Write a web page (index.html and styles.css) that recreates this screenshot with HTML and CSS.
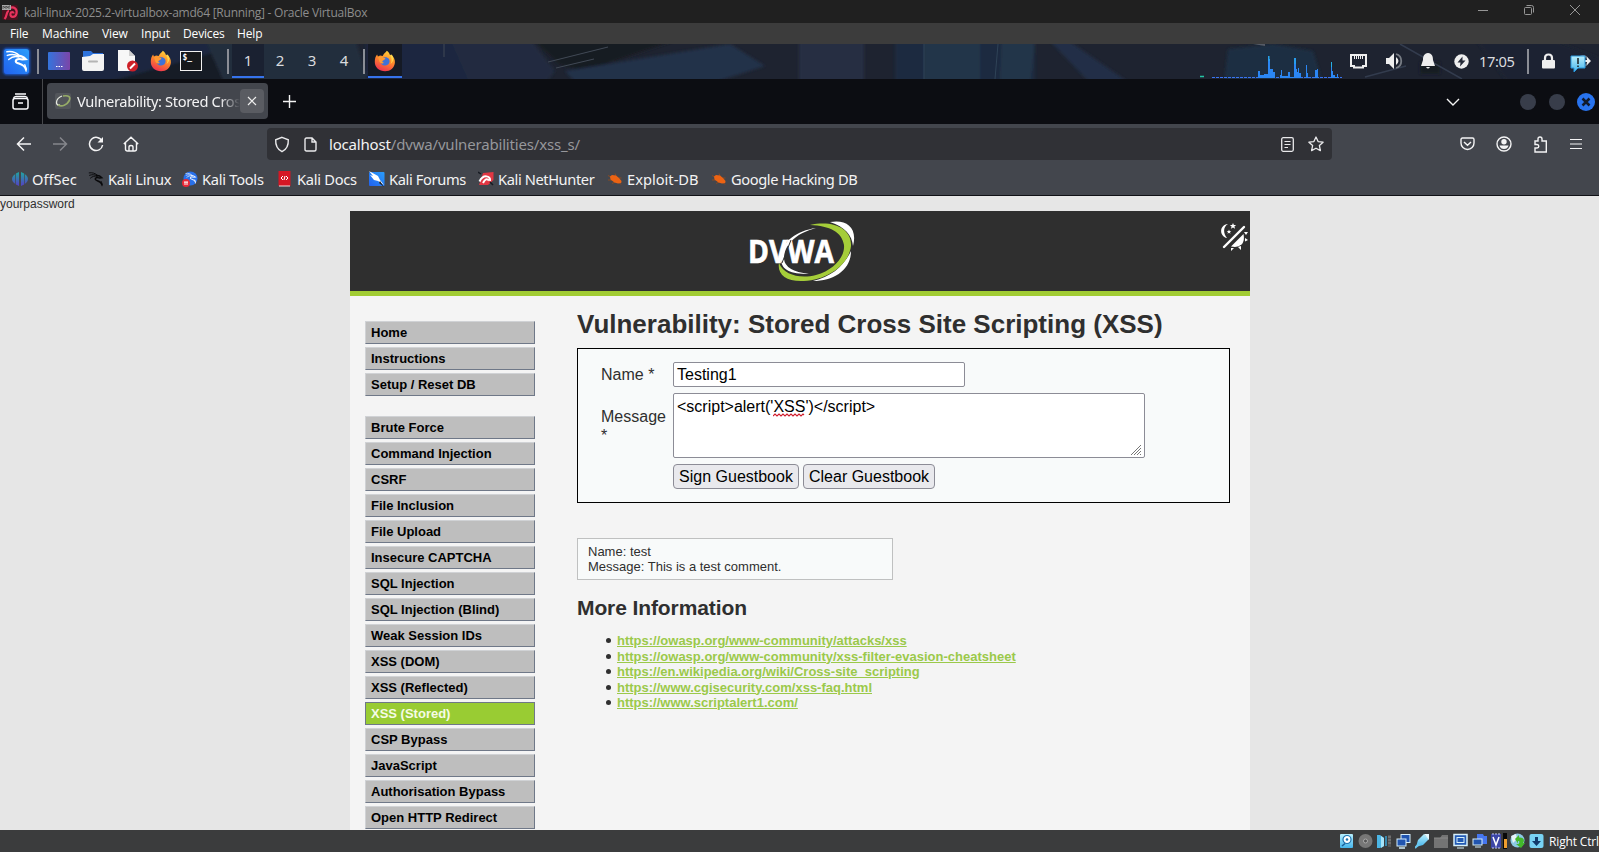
FILE: index.html
```html
<!DOCTYPE html>
<html lang="en">
<head>
<meta charset="utf-8">
<title>kali-linux-2025.2-virtualbox-amd64 [Running] - Oracle VirtualBox</title>
<link rel="stylesheet" href="styles.css">
</head>
<body>
<svg class="defs" width="0" height="0">
  <defs>
    <linearGradient id="fx" x1="0.7" y1="0" x2="0.3" y2="1"><stop offset="0" stop-color="#ffd43c"/><stop offset=".45" stop-color="#ff8a2a"/><stop offset="1" stop-color="#ee2f52"/></linearGradient>
    <linearGradient id="desk" x1="0" y1="0" x2="1" y2="0"><stop offset="0" stop-color="#3474dd"/><stop offset="1" stop-color="#7c45a8"/></linearGradient>
    <linearGradient id="kali" x1="0" y1="1" x2="1" y2="0"><stop offset="0" stop-color="#2161ee"/><stop offset="1" stop-color="#2a9dfb"/></linearGradient>
    <linearGradient id="off" x1="0" y1="0" x2="0" y2="1"><stop offset="0" stop-color="#1fa6a0"/><stop offset="1" stop-color="#553fc4"/></linearGradient>
    <linearGradient id="sky" x1="0" y1="0" x2="0" y2="1"><stop offset="0" stop-color="#b8eefc"/><stop offset="1" stop-color="#45b5ec"/></linearGradient>
    <filter id="soft"><feGaussianBlur stdDeviation="1.500"/></filter>
    <filter id="glow"><feGaussianBlur stdDeviation="1.200"/></filter>
    <symbol id="firefox" viewBox="0 0 22 22">
      <path d="M12.8.8c2 1.400 2.900 3 3.300 4.800l1-1.200c2.600 2.300 4.100 5 3.800 8.400-.5 5-4.600 8.500-9.800 8.500C5.300 21.300.8 17.300.8 12c0-3.500.8-5.800 2.300-7.500l.8 2 2.200-1 2.600.4C9.800 3.200 11.800 2.700 12.800.8z" fill="url(#fx)"/>
      <path d="M8 8.500c1.500-1.500 5.500-1.800 7 .6 1.600 3-.2 6.300-3.700 6.500-3 .1-5-2-4.600-4.500l3-.7z" fill="#3f72d8"/>
      <path d="M4 7.200c2.500-.8 4.600-.4 5.500.3 1.300.2 2 .8 1.900 1.600L8.700 10.600c-1 1.200.2 2.400 1.600 2.200-2 1.600-5 .3-5.200-2.300z" fill="#ff9a32"/>
      <path d="M16.200 5.500c1.800 2.500 2 6 .3 8.400 2.500-1.500 3.500-5 2-8.200l-1.400-1.300z" fill="#ffd84d"/>
    </symbol>
    <symbol id="dragon" viewBox="0 0 26 26">
      <g fill="none" stroke="currentColor" stroke-linecap="round">
        <path d="M2 3c5-.8 10 .5 14 4.500M2.500 7c4-1.500 8-1.500 12.500.8M4 11.500c3-2.800 7-4 11-2.800" stroke-width="1.500"/>
        <path d="M14 7.500c3-.4 5.500.4 8.500 3.500l-3.500.3c-4-1-7.500-.5-7.300 2.200.2 3 8.800 1.500 11 8.500" stroke-width="2.300"/>
        <path d="M21.500 17c1 2 1.500 4 1.300 7" stroke-width="1.500"/>
      </g>
    </symbol>
    <symbol id="bug" viewBox="0 0 16 16"><path d="M1 4.500l3 1.500M1 9h5M5 12.500l3-1.500M8 2.500l1 2.500M14.500 7h-3M14 13.500l-2-2" stroke="#8a4a22" stroke-width="1"/><path d="M3 5.500l2-1.500 4 .5 3 2.500 2.500 3-.3 2-3.200.5-3.500-1-4-3z" fill="#ec6313"/></symbol>
  </defs>
</svg>

<header class="titlebar">
  <svg class="vmicon" width="18" height="18" viewBox="0 0 18 18"><rect x="1" y="2" width="16" height="15" rx="2" fill="#47131f"/><path d="M8.500 5c4.500-2 8 1 7 5.500-1 4.500-7 4.500-6 0 .4-2 3-2 3 0M8 8c-3 0-1.500 5-4.500 8" fill="none" stroke="#e8335d" stroke-width="2.200"/><path d="M1 2h9v5H1z" fill="#a9a9a9"/><path d="M2 6V3l2 2V3m1 3V3l2 2V3m1 3V3h1" fill="none" stroke="#444" stroke-width=".8"/></svg>
  <span class="wtitle">kali-linux-2025.2-virtualbox-amd64 [Running] - Oracle VirtualBox</span>
  <div class="wincontrols">
    <svg width="12" height="12"><path d="M1 6.500h10" stroke="#969696"/></svg>
    <svg width="12" height="12" fill="none" stroke="#969696"><rect x="1.500" y="3.500" width="7" height="7" rx="1"/><path d="M3.500 1.500h5q2 0 2 2v5"/></svg>
    <svg width="12" height="12"><path d="M1 1l10 10M11 1L1 11" stroke="#969696"/></svg>
  </div>
</header>
<nav class="vmmenu"><span>File</span><span>Machine</span><span>View</span><span>Input</span><span>Devices</span><span>Help</span></nav>

<div class="panel">
  <svg class="wallpaper" width="1599" height="35" viewBox="0 0 1599 35">
    <rect width="1599" height="35" fill="#1e2330"/>
    <g filter="url(#soft)">
      <path d="M-5-5H205l20 45H-5z" fill="#1c2740"/><path d="M100 40L215 8l12 32z" fill="#191d27"/><path d="M205-5h150l14 45H225z" fill="#222d3e"/>
      <path d="M366-5h100l30 45H366z" fill="#1c2840"/><path d="M450-5h80l25 32-10 13h-75z" fill="#212c40"/><path d="M532-5h148l-95 32-25-6z" fill="#191c24"/>
      <path d="M565 27L730 0l35 22-50 16H575z" fill="#20304a"/><path d="M799-5h65v45h-65z" fill="#252d42"/><path d="M895-5h140v45H895z" fill="#1f2c3f"/>
      <path d="M924-5h56v45h-56zM1002-5h33l-5 45h-30z" fill="#24364a"/><path d="M1048-5h18l65 45h-40z" fill="#202f46"/><path d="M1228 5l45-5 40 7 10 33h-99z" fill="#1c2f42"/>
      <path d="M1475-5h75l49 19v26h-90z" fill="#1c2432"/><path d="M1420 18h20v12h-20z" fill="#191c24"/>
    </g>
    <path d="M548 18l60-15M556 24l38-9M444 0v13" stroke="#414955" fill="none"/>
    <path d="M924 0v35M998 0l-3 35" stroke="#2f4357"/>
    <path d="M1400 0l62 35M1365 33l41-11" stroke="#333c4e" stroke-width="1.500"/><path d="M1253 0h12v2z" fill="#555b66"/>
  </svg>
  <div class="launchers">
    <svg class="kali" width="34" height="34" viewBox="0 0 34 34"><rect x="3" y="4" width="27" height="27" rx="4" fill="#1c5ad0" filter="url(#glow)"/><rect x="4" y="5" width="25" height="25" rx="3" fill="url(#kali)"/><use href="#dragon" x="5" y="5" width="24" height="24" color="#fff"/></svg>
    <i class="sep"></i>
    <svg class="l-desk" width="22" height="18"><rect width="22" height="18" rx="1" fill="url(#desk)"/><path d="M8 14.500h1.500m1 0H12m1 0h1.500" stroke="#fff"/></svg>
    <svg class="l-files" width="22" height="20"><path d="M1 0h8l2 2h10v6H1z" fill="#2d72dc"/><path d="M0 6l8-1 3-2h11v15q0 2-2 2H2q-2 0-2-2z" fill="#f3f3f3"/><path d="M7 10.500h8" stroke="#b4b4b4" stroke-width="2" stroke-linecap="round"/></svg>
    <svg class="l-edit" width="22" height="22"><path d="M1 0h11l6 6v15H1z" fill="#f7f7f7"/><path d="M12 0v6h6z" fill="#cfcfcf"/><circle cx="15.500" cy="16" r="5.500" fill="#ce2028"/><path d="M13 18.500l5-5" stroke="#fff" stroke-width="2"/></svg>
    <svg class="l-fx" width="22" height="22"><use href="#firefox"/></svg>
    <svg class="l-term" width="22" height="20"><rect x=".5" y=".5" width="21" height="19" fill="#17191c" stroke="#f2f2f2"/><text x="2.500" y="9" class="termtext">$_</text></svg>
    <i class="sep sep2"></i>
    <div class="spaces"><span class="on">1</span><span>2</span><span>3</span><span>4</span></div>
    <i class="sep sep3"></i>
    <div class="task"><svg width="22" height="22"><use href="#firefox"/></svg></div>
  </div>
  <div class="tray">
    <svg class="graph" width="142" height="24"><path d="M12 23.500h130" stroke="#3974f2" stroke-dasharray="3 1"/><path d="M0 22.500h4" stroke="#25c5a4" stroke-width="1.500"/><path d="M58 24v-7h2v4h4v-1h4v1V2h1v3h1v10h3v3h2v6zM80 24v-3h1v-5h1v6h6v-4h2v5h4V13h0V4h2v11h1v3h1v-4h1v5h2v5zM106 24V11h1v8h1v5zM115 24v-8h2v-1h1v9zM131 24V8h1v9h1v4h2v2h2v-3h1v4z" fill="#2b87f4"/><path d="M69 2v5M95 4v6M131.500 8v5" stroke="#27b2e5"/></svg>
    <svg class="t-net" width="17" height="15"><path d="M1 1h15v11h-3v1.500H4V12H1z" fill="none" stroke="#eee" stroke-width="2"/><path d="M4.500 2v3m2-3v3m2-3v3m2-3v3m2-3v3" stroke="#eee"/></svg>
    <svg class="t-vol" width="18" height="16"><path d="M1 5h3l5-5v16l-5-5H1z" fill="#eee"/><path d="M11 4q5 4 0 8z" fill="#eee"/><path d="M11 1c7 2 7 12 0 14" fill="none" stroke="#777c84" stroke-width="1.800"/></svg>
    <svg class="t-bell" width="14" height="16"><path d="M7 0c4 .5 5 3 5 7l2 6H0l2-6c0-4 1-6.500 5-7zM5 14h4q-2 3-4 0z" fill="#eee"/></svg>
    <svg class="t-pow" width="15" height="15"><circle cx="7.500" cy="7.500" r="7.200" fill="#eee"/><path d="M8.500 2.500l-5 6h3l-.5 4 5.500-6h-3z" fill="#242936"/></svg>
    <span class="clock">17:05</span>
    <i class="sep sep4"></i>
    <svg class="t-lock" width="13" height="16"><path d="M3 8V5q0-3.500 3.500-3.500T10 5v3" fill="none" stroke="#eee" stroke-width="2.200"/><rect y="7" width="13" height="8.500" rx="1" fill="#eee"/></svg>
    <svg class="t-msg" width="22" height="18"><circle cx="13" cy="7" r="5" fill="none" stroke="#7d858e" stroke-width="2"/><path d="M14 6h3V3l4 4-4 4V8h-3z" fill="#eee"/><path d="M1 2h14v12H8l-4 4v-4H1z" fill="url(#sky)" stroke="#2897dd"/><path d="M8 4v6m0 1.500V13" stroke="#111" stroke-width="1.400"/></svg>
  </div>
</div>

<div class="tabs">
  <svg class="archive" width="17" height="17" fill="none" stroke="#fbfbfe" stroke-width="1.500"><path d="M3 1h11"/><rect x="1" y="5.500" width="15" height="10.500" rx="2"/><path d="M1.500 5.500Q2 3.500 4 3.500h9q2 0 2.500 2M6 10h5"/></svg>
  <i class="tabsep"></i>
  <div class="tab">
    <svg width="16" height="16"><rect width="16" height="16" rx="2" fill="#53565b"/><path d="M7 3C0 6 0 13 5 12" fill="none" stroke="#e6e9e0" stroke-width="1.300"/><path d="M8 3c6-1 8 1 6 5-2 4-7 6-11 4" fill="none" stroke="#97ac68" stroke-width="1.700"/></svg>
    <span class="tabname">Vulnerability: Stored Cros</span>
    <b class="close"><svg width="10" height="10"><path d="M1 1l8 8M9 1L1 9" stroke="#eee" stroke-width="1.200"/></svg></b>
  </div>
  <svg class="plus" width="13" height="13"><path d="M6.500 0v13M0 6.500h13" stroke="#f4f4f4" stroke-width="1.400"/></svg>
  <svg class="chev" width="14" height="8"><path d="M1 1l6 6 6-6" fill="none" stroke="#f4f4f4" stroke-width="1.400"/></svg>
  <i class="dot"></i><i class="dot"></i>
  <svg class="fxclose" width="18" height="18"><circle cx="9" cy="9" r="9" fill="#2873ee"/><path d="M5.500 5.500l7 7m0-7l-7 7" stroke="#111a2c" stroke-width="2.500"/></svg>
</div>

<div class="toolbar">
  <div class="navrow">
    <svg class="n-back" width="16" height="16" fill="none" stroke="#f4f4f5" stroke-width="1.500"><path d="M15 8H1.500M8 1.500L1.500 8 8 14.500"/></svg>
    <svg class="n-fwd" width="16" height="16" fill="none" stroke="#85878c" stroke-width="1.500"><path d="M1 8h13.500M8 1.500L14.500 8 8 14.500"/></svg>
    <svg class="n-load" width="16" height="16" fill="none" stroke="#f4f4f5" stroke-width="1.500"><path d="M14 5A6.600 6.600 0 1 0 14.600 9"/><path d="M15 1v5.500H9.500z" fill="#f4f4f5" stroke="none"/></svg>
    <svg class="n-home" width="16" height="16" fill="none" stroke="#f4f4f5" stroke-width="1.400"><path d="M.8 8L8 1.200 15.200 8M2.500 7v6q0 2 2 2h7q2 0 2-2V7M6 15v-4q0-1.500 2-1.500T10 11v4"/></svg>
    <div class="urlbar">
      <svg width="16" height="17" fill="none" stroke="#e9e9eb" stroke-width="1.400"><path d="M8 1.300l6.300 2.500C14.600 9 12.500 13.500 8 15.700 3.500 13.500 1.400 9 1.700 3.800z"/></svg>
      <svg class="doc" width="13" height="15" fill="none" stroke="#e9e9eb" stroke-width="1.400"><path d="M1 2.500Q1 1 2.500 1H8l4 4v7.500q0 1.500-1.500 1.500h-8Q1 14 1 12.500zM8 1v4h4"/></svg>
      <span class="url">localhost<em>/dvwa/vulnerabilities/xss_s/</em></span>
      <svg class="reader" width="13" height="15" fill="none" stroke="#e9e9eb"><rect x=".7" y=".7" width="11.600" height="13.600" rx="1.500" stroke-width="1.300"/><path d="M3.500 4.500h6m-6 3h6m-6 3h3.500" stroke-width="1.200"/></svg>
      <svg class="star" width="16" height="16" fill="none" stroke="#e9e9eb" stroke-width="1.300" stroke-linejoin="round"><path d="M8 1l2.100 4.600 5 .6-3.700 3.400 1 5L8 12.200l-4.400 2.400 1-5L.9 6.200l5-.6z"/></svg>
    </div>
    <svg class="n-pocket" width="15" height="14" fill="none" stroke="#f4f4f5" stroke-width="1.400"><path d="M2.500 1h10Q14 1 14 2.500V6a6.500 6.500 0 0 1-13 0V2.500Q1 1 2.500 1zM4 5l3.500 3.300L11 5"/></svg>
    <svg class="n-acct" width="16" height="16"><circle cx="8" cy="8" r="7" fill="none" stroke="#f4f4f5" stroke-width="1.400"/><circle cx="8" cy="5.700" r="2.700" fill="#f4f4f5"/><path d="M3.500 9.500h9Q11.500 13 8 13t-4.500-3.500z" fill="#f4f4f5"/></svg>
    <svg class="n-ext" width="15" height="17" fill="none" stroke="#f4f4f5" stroke-width="1.400"><path d="M5 5V3q0-2 2-2t2 2v2h4.300v11H2v-4h2q1.800 0 1.800-1.700T4 8.500H2V5z"/></svg>
    <svg class="n-menu" width="12" height="12"><path d="M0 1.500h12M0 6h12m-12 4.500h12" stroke="#f4f4f5" stroke-width="1.200"/></svg>
  </div>
  <div class="bookmarks">
    <span class="b0"><svg width="16" height="16"><path d="M7 1v14Q0 12 0 8t7-7zM9 1v14q7-3 7-7T9 1z" fill="url(#off)"/><path d="M3.500 2v12m9-12v12" stroke="#43464d" stroke-width=".7"/></svg>OffSec</span>
    <span class="b1"><svg width="16" height="16"><use href="#dragon" color="#09090b"/></svg>Kali Linux</span>
    <span class="b1"><svg width="16" height="16"><circle cx="8.500" cy="7.500" r="7" fill="#2870ea"/><use href="#dragon" x="3" y="1" width="12" height="12" color="#e5efff"/><circle cx="4" cy="12" r="4" fill="#e92836"/><path d="M2 11h4M3 11v3m2-3v3" stroke="#fff"/></svg>Kali Tools</span>
    <span class="b1"><svg width="16" height="16"><path d="M1.500 0h12v15h-12z" fill="#d51724"/><path d="M2 15h11" stroke="#f0dcdc"/><path d="M6 5L4 7l2 2m3-4l2 2-2 2M7 9l1-4" fill="none" stroke="#fff"/></svg>Kali Docs</span>
    <span class="b2"><svg width="16" height="16"><rect y="1" width="15.500" height="14" rx="1" fill="url(#kali)"/><path d="M0 0l9 5 2 4 4 5-6-4-4-1-4-5 3 1z" fill="#fff"/><path d="M11 10l4 6-5-4z" fill="#222"/></svg>Kali Forums</span>
    <span class="b3"><svg width="16" height="16"><path d="M5 2l10.500-1v8L10 14H1z" fill="#e03743"/><path d="M1.500 10.500C5 3 13 4.500 12 10M5 12q3-6 6-2.500" fill="none" stroke="#fff" stroke-width="2"/><path d="M0 1l3 2M12 11l3 3" stroke="#161a22" stroke-width="1.500"/></svg>Kali NetHunter</span>
    <span class="b4"><svg width="16" height="16"><use href="#bug"/></svg>Exploit-DB</span>
    <span class="b3"><svg width="16" height="16"><use href="#bug"/></svg>Google Hacking DB</span>
  </div>
</div>

<div class="page">
  <div class="leak">yourpassword</div>
  <div class="container">
    <div class="header">
      <svg class="logo" width="110" height="64" viewBox="0 0 110 64">
        <path d="M82 2C98-1 110 7 105 26 104 15 97 7 82 2z" fill="#fff"/>
        <path d="M103 31C103 50 86 61 65 61 83 57 96 46 103 31z" fill="#fff"/>
        <path d="M62 5C86 0 104 9 103 26 101 45 79 60 56 61 38 62 29 54 31 43 36 55 52 59 68 55 86 50 97 37 96 25 94 12 82 6 62 5z" fill="#a5cd39"/>
        <path d="M68 8C49 13 36 24 36 39q1 12 25 15C42 54 34 50 33 40 32 23 47 11 68 8z" fill="#fff"/>
        <text x="0" y="43" class="logotext" textLength="86" lengthAdjust="spacingAndGlyphs">DVWA</text>
        <path d="M43 20L34 43" stroke="#303030" stroke-width="1"/>
      </svg>
      <svg class="theme" width="28" height="28" viewBox="0 0 28 28"><path d="M8 1C-1 2-1 13 7 15 3 10 3 4 8 1z" fill="#fff"/><path d="M13 0l.9 2h2.200l-1.700 1.500.7 2.300L13 4.500l-2.100 1.300.7-2.300L9.900 2h2.200zM9 6.500l.6 1.500h1.700L10 9l.5 1.700L9 9.700l-1.500 1L8 9 6.700 8h1.700z" fill="#fff"/><path d="M4 24L24 4" stroke="#fff" stroke-width="2.400" stroke-linecap="round"/><path d="M11 23.500L23.500 11Q25 18 21.500 21.500T11 23.500z" fill="#fff"/><path d="M24 9l4 0-2 3zM25 15l3 2-3 1.500zM18 24l3-1v4zM11 25l3 0-3 3z" fill="#fff"/></svg>
    </div>
    <div class="main">
      <aside class="menu">
        <ul><li>Home</li><li>Instructions</li><li>Setup / Reset DB</li></ul>
        <ul><li>Brute Force</li><li>Command Injection</li><li>CSRF</li><li>File Inclusion</li><li>File Upload</li><li>Insecure CAPTCHA</li><li>SQL Injection</li><li>SQL Injection (Blind)</li><li>Weak Session IDs</li><li>XSS (DOM)</li><li>XSS (Reflected)</li><li class="selected">XSS (Stored)</li><li>CSP Bypass</li><li>JavaScript</li><li>Authorisation Bypass</li><li>Open HTTP Redirect</li></ul>
      </aside>
      <div class="body">
        <h1>Vulnerability: Stored Cross Site Scripting (XSS)</h1>
        <div class="form">
          <label>Name *</label><div class="field name">Testing1</div>
          <label class="two">Message *</label>
          <div class="field message">&lt;script&gt;alert('<span class="spell">XSS<svg width="33" height="4" viewBox="0 0 33 4"><path d="M0 3l2-2 2 2 2-2 2 2 2-2 2 2 2-2 2 2 2-2 2 2 2-2 2 2 2-2 2 2 2-2 1 1" fill="none" stroke="#d01c2c" stroke-width="1.100"/></svg></span>')&lt;/script&gt;
            <svg class="grip" width="11" height="11"><path d="M0 11L10 1M3 11l7-7M6 11l4-4M9 11l1-1" stroke="#777" stroke-width="1"/></svg></div>
          <div class="buttons"><span class="btn sign">Sign Guestbook</span><span class="btn clear">Clear Guestbook</span></div>
        </div>
        <div class="comment">Name: test<br>Message: This is a test comment.</div>
        <h2>More Information</h2>
        <ul class="links"><li><a>https://owasp.org/www-community/attacks/xss</a></li><li><a>https://owasp.org/www-community/xss-filter-evasion-cheatsheet</a></li><li><a>https://en.wikipedia.org/wiki/Cross-site_scripting</a></li><li><a>https://www.cgisecurity.com/xss-faq.html</a></li><li><a>https://www.scriptalert1.com/</a></li></ul>
      </div>
    </div>
  </div>
</div>

<footer class="status">
  <svg width="15" height="16"><rect x="1" y="1" width="13" height="14" rx="1" fill="url(#sky)"/><circle cx="8" cy="6.500" r="4" fill="#fff" stroke="#1c72b0" stroke-width="1.200"/><circle cx="8" cy="6.500" r="1.300" fill="#1c72b0"/><path d="M3 13l3-2.500" stroke="#1c5f98" stroke-width="1.500"/></svg>
  <svg width="15" height="16"><circle cx="7.500" cy="8" r="7" fill="#777"/><circle cx="7.500" cy="8" r="2" fill="#555" stroke="#aaa"/></svg>
  <svg width="15" height="16"><path d="M0 2h3l4 3v8l-4 2H0z" fill="#4bb6e6"/><path d="M4 3l3 2v8l-3 2z" fill="#a6e3f8"/><path d="M9 3v10" stroke="#37a0d3" stroke-width="1.500"/><path d="M11 2h3v12h-3z" fill="#555"/><path d="M11 4h3m-3 3h3m-3 3h3" stroke="#888"/></svg>
  <svg width="15" height="16"><rect x="5" y="1.500" width="9" height="8" fill="#2155b0" stroke="#d5eefa"/><rect x="1" y="6" width="9" height="7" fill="#2155b0" stroke="#d5eefa"/><path d="M3 15h6" stroke="#d5eefa" stroke-width="1.500"/></svg>
  <svg width="15" height="16"><path d="M1 14l2-7 6-6 5 5-6 6z" fill="url(#sky)"/><path d="M9 1h5v6z" fill="#e3f7fd"/><path d="M0 15l4-4" stroke="#6bc7ee" stroke-width="2"/></svg>
  <svg width="15" height="16"><path d="M0 5h6l2-3h6v13H0z" fill="#747474"/><path d="M0 5h14" stroke="#898989"/></svg>
  <svg width="15" height="16"><rect x="1" y="1.500" width="13" height="11" fill="#225ab4" stroke="#d7f0fa" stroke-width="1.500"/><rect x="4" y="4.500" width="7" height="5" fill="none" stroke="#d7f0fa"/><path d="M4 15h7" stroke="#d7f0fa"/></svg>
  <svg width="15" height="16"><path d="M5 1h6l1 2h3v8H5z" fill="#4676ee"/><rect x="1" y="6" width="9" height="6" fill="#2155b0" stroke="#d5eefa"/><path d="M3 14h6" stroke="#d5eefa"/></svg>
  <svg class="wide" width="16" height="16"><rect x="0" y="1" width="10" height="14" fill="#3c46a6"/><path d="M1 1h8M1 15h8" stroke="#c2c7f2" stroke-dasharray="2 1"/><path d="M2 4l3 8 3-8" fill="none" stroke="#fff" stroke-width="1.500"/><path d="M12 0h4v16h-4z" fill="#080808"/><path d="M13 6h3v9h-3z" fill="#ef9d2e"/></svg>
  <svg class="wide" width="16" height="16"><circle cx="7.500" cy="7.500" r="7" fill="#8cc9e5"/><path d="M1 3l5-2 1 5-4 4z" fill="#e6f4f8"/><path d="M5 6l4-4v2.500c5-.5 6 3 4 5.500h2l-4 5-5-4h2.500c1.500-2 1-3.500-.5-3v2.500z" fill="#43b82b"/></svg>
  <svg width="15" height="16"><rect x=".5" y="1" width="14" height="14" rx="2" fill="#78d2f4"/><path d="M6 4h3v4h3l-4.500 5L3 8h3z" fill="#123b6c"/></svg>
  <span>Right Ctrl</span>
</footer>
</body>
</html>
```
FILE: styles.css
```css
* { box-sizing: border-box; }
body { margin: 0; width: 1599px; height: 852px; overflow: hidden; display: flex; flex-direction: column; font-family: "Noto Sans", sans-serif; }
svg, i { display: block; flex: none; }
.defs { position: absolute; }
ul { list-style: none; margin: 0; padding: 0; }

.titlebar { height: 23px; flex: none; background: #202020; color: #8d8d8d; display: flex; align-items: center; font: 12px "Open Sans", sans-serif; }
.vmicon { margin-left: 1px; margin-right: 5px; }
.wtitle { letter-spacing: -.24px; white-space: nowrap; padding-top: 1px; }
.wincontrols { display: flex; gap: 34px; margin-left: auto; margin-right: 18px; padding-bottom: 3px; }
.vmmenu { height: 21px; flex: none; background: #3c3c3c; color: #fff; font: 12px/21px "Open Sans", sans-serif; display: grid; grid-template-columns: 32px 60px 39px 42px 54px 40px; padding-left: 10px; letter-spacing: -.15px; }

.panel { position: relative; height: 35px; flex: none; display: flex; justify-content: space-between; }
.wallpaper { position: absolute; inset: 0; }
.launchers, .tray { position: relative; display: flex; align-items: center; height: 35px; padding-bottom: 1px; }
.sep { width: 2px; height: 25px; background: #8b8e96; margin-left: 3px; }
.l-desk { margin-left: 9px; }
.l-files { margin-left: 12px; }
.l-edit { margin-left: 13px; }
.l-fx { margin-left: 11px; }
.l-term { margin-left: 8px; }
.termtext { font: bold 8px "DejaVu Sans Mono", monospace; fill: #fff; }
.sep2 { margin-left: 25px; }
.spaces { display: flex; align-self: flex-start; margin-left: 3px; height: 34px; color: #dadbdf; font-size: 15px; line-height: 33px; text-align: center; }
.spaces span { width: 32px; }
.spaces .on { background: #1a2131; border-bottom: 2px solid #3673ed; }
.task { width: 34px; height: 34px; align-self: flex-start; margin-left: 3px; padding: 6px; background: #151a25; border-bottom: 2px solid #3673ed; }
.tray { padding-right: 7px; }
.graph { align-self: flex-end; }
.t-net { margin-left: 8px; }
.t-vol { margin-left: 18px; }
.t-bell { margin-left: 18px; }
.t-pow { margin-left: 19px; }
.clock { width: 36px; margin-left: 10px; margin-right: 1px; color: #dadbdf; font-size: 14.670px; letter-spacing: -.4px; white-space: nowrap; padding-bottom: 1px; }
.sep4 { margin-left: 11px; }
.t-lock { margin-left: 13px; }
.t-msg { margin-left: 15px; margin-top: 4px; }

.tabs { height: 45px; flex: none; background: #0c0d12; display: flex; align-items: center; padding-right: 4px; }
.archive { margin-left: 12px; }
.tabsep { width: 1px; height: 45px; background: #47484c; margin-left: 13px; }
.tab { width: 221px; height: 36px; margin: 0 0 1px 4px; border-radius: 4px; background: #43464d; display: flex; align-items: center; padding: 0 4px 0 8px; color: #f3f3f4; font-size: 15px; }
.tabname { margin-left: 5px; width: 164px; white-space: nowrap; letter-spacing: -.55px; -webkit-mask-image: linear-gradient(90deg, #000 88%, transparent); mask-image: linear-gradient(90deg, #000 88%, transparent); }
.tabname { font-size: 14.670px; letter-spacing: -.37px; margin-left: 6px; width: 163px; }
.close { width: 24px; height: 24px; flex: none; margin-left: auto; padding: 7px; border-radius: 4px; background: #5a5c62; }
.plus { margin-left: 15px; }
.chev { margin-left: auto; margin-right: 60px; }
.dot { width: 16px; height: 16px; border-radius: 50%; background: #383d4a; margin-right: 13px; }
.dot + .dot { margin-right: 12px; }

.toolbar { height: 72px; flex: none; background: #43464d; border-bottom: 1px solid #101116; color: #f3f3f4; }
.navrow { display: flex; align-items: center; height: 40px; padding-right: 17px; }
.n-back { margin-left: 16px; }
.n-fwd { margin-left: 20px; }
.n-load { margin-left: 20px; }
.n-home { margin-left: 19px; }
.urlbar { width: 1066px; height: 32px; margin-left: 128px; margin-right: 128px; border-radius: 4px; background: #303136; display: flex; align-items: center; padding: 0 8px 0 7px; font-size: 15px; }
.urlbar .doc { margin-left: 14px; }
.url { margin-left: 12px; letter-spacing: -.18px; }
.url em { font-style: normal; color: #96979b; }
.reader { margin-left: auto; }
.star { margin-left: 14px; }
.n-pocket { margin-right: 21px; }
.n-acct { margin-right: 21px; }
.n-ext { margin-right: 22px; }
.bookmarks { display: grid; grid-template-columns: 76px 94px 95px 92px 109px 129px 104px 160px; padding-left: 12px; height: 30px; font-size: 14.670px; }
.bookmarks span { display: flex; align-items: center; gap: 4px; white-space: nowrap; }
.bookmarks .b1 { letter-spacing: -.27px; }
.bookmarks .b2 { letter-spacing: -.36px; }
.bookmarks .b3 { letter-spacing: -.4px; }

.page { height: 634px; flex: none; background: #e6e6e6; overflow: hidden; font-family: "Liberation Sans", Arial, sans-serif; color: #2f2f2f; }
.leak { height: 15px; font-size: 12px; line-height: 17px; }
.container { width: 900px; margin-left: 350px; background: #f4f4f4; }
.header { height: 85px; background: #2f2f2f; border-bottom: 5px solid #a1cc33; display: flex; padding: 9px 2px 0 398px; }
.logotext { font: bold 33px "Open Sans", sans-serif; fill: #fff; stroke: #fff; stroke-width: .7px; }
.theme { margin: 3px 0 0 auto; }
.main { display: flex; height: 620px; padding-left: 15px; }
.menu { width: 170px; padding-top: 25px; }
.menu ul { display: grid; gap: 3px; margin-bottom: 20px; }
.menu li { height: 23px; padding-left: 5px; border: 1px solid; border-color: #d0d2d5 #6f7888 #6f7888 #d0d2d5; background: #bebebe; color: #000; font-weight: bold; font-size: 13px; line-height: 21px; }
.menu .selected { background: #9c3; color: #f5fbe6; border-color: #6f7888; }
.body { width: 653px; margin-left: 42px; }
h1 { margin: 13px 0 9px; font-size: 26px; line-height: 30px; white-space: nowrap; }
.form { height: 155px; border: 1px solid #000; background: #f8fafa; padding: 13px 0 0 23px; display: grid; grid-template-columns: 66px 472px; grid-template-rows: 25px 65px 25px; gap: 6px; font-size: 16px; align-content: start; line-height: 18px; }
.form label { align-self: center; }
.form .two { line-height: 19px; }
.field { position: relative; background: #fff; border: 1px solid #8c8c96; border-radius: 2px; color: #000; padding: 3px; white-space: nowrap; }
.message { padding-top: 4px; }
.name { width: 292px; }
.spell { position: relative; }
.spell svg { position: absolute; left: 0; top: 15px; }
.grip { position: absolute; right: 2px; bottom: 2px; }
.buttons { grid-column: 2; display: flex; gap: 4px; }
.btn { height: 25px; border: 1px solid #8c8c96; border-radius: 4px; background: #e9e9ed; color: #000; text-align: center; line-height: 23px; }
.sign { width: 126px; }
.clear { width: 132px; }
.comment { width: 316px; height: 42px; margin-top: 35px; border: 1px solid #bfc0c0; background: #f8fafa; padding: 5px 10px; font-size: 13px; line-height: 15px; }
h2 { margin: 15px 0 13px; font-size: 21px; line-height: 25px; letter-spacing: -.1px; }
.links { padding-left: 29px; font-size: 13px; line-height: 15.500px; }
.links li { display: flex; align-items: center; gap: 6px; }
.links li::before { content: ""; width: 5px; height: 5px; border-radius: 50%; background: #2f2f2f; }
.links a { color: #9bc94a; font-weight: bold; text-decoration: underline; }

.status { height: 22px; flex: none; background: #3b3c3d; color: #fff; display: flex; align-items: center; gap: 4px; padding-left: 1339px; font: 12px "Open Sans", sans-serif; white-space: nowrap; }
.status .wide { margin-right: -1px; }
.status span { margin-left: 1px; letter-spacing: -.15px; }
```
